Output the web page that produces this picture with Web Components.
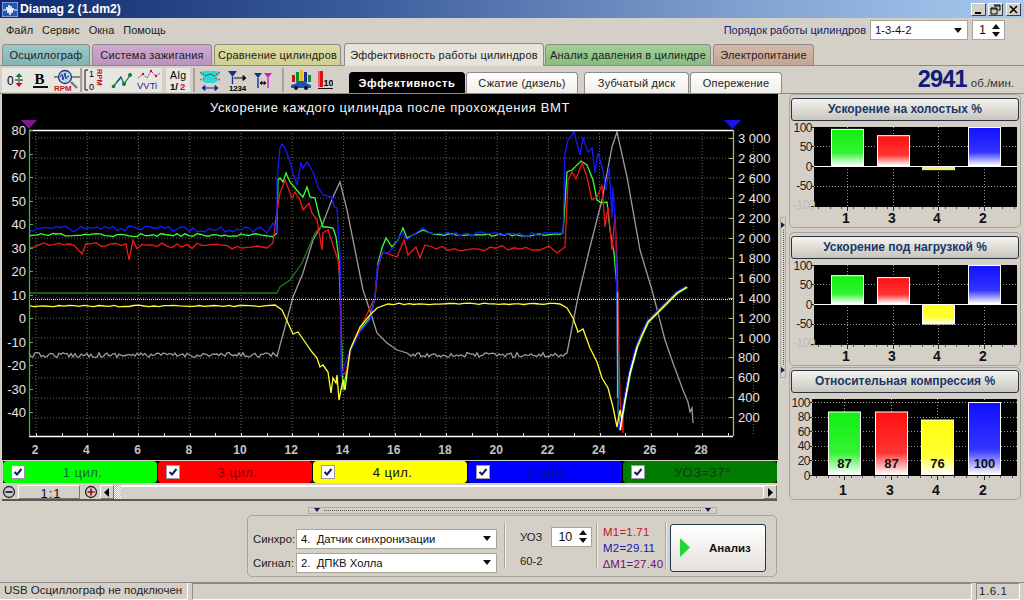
<!DOCTYPE html>
<html lang="ru">
<head>
<meta charset="utf-8">
<title>Diamag 2</title>
<style>
  html, body { margin: 0; padding: 0; width: 1024px; height: 600px; overflow: hidden; background: #d4d0c8; }
  body { font: 12px "Liberation Sans", Arial, sans-serif; color: #111; }
</style>
</head>
<body>
<app-window></app-window>

<script>
(() => {
  const FONT = '"Liberation Sans", Arial, sans-serif';

  // small helper: one template per element, cloned into an open shadow root
  function define(name, html, init) {
    const template = document.createElement('template');
    template.innerHTML = html;
    customElements.define(name, class extends HTMLElement {
      constructor() {
        super();
        this.attachShadow({ mode: 'open' }).appendChild(template.content.cloneNode(true));
        if (init) init(this, this.shadowRoot);
      }
    });
  }

  /* ---------- window chrome ---------- */

  define('title-bar', `
    <style>
      :host { display: flex; align-items: center; height: 18px; padding: 0 3px 0 2px;
        background: linear-gradient(90deg, #0f2b6e 0%, #3a5c9c 35%, #7d9ccc 70%, #a6caf0 100%); }
      svg.logo { width: 16px; height: 15px; margin-right: 2px; }
      b { flex: 1; color: #fff; font: bold 12.2px ${FONT}; }
      .wb { width: 15px; height: 13px; margin-left: 2px; background: #d4d0c8; border: 1px solid;
        border-color: #fff #404040 #404040 #fff; box-sizing: border-box; display: block; }
      .wb + .wb:last-child { margin-left: 3px; }
    </style>
    <svg class="logo" viewBox="0 0 16 15"><rect width="16" height="15" fill="#2456b8" stroke="#cfe0ff"/>
      <path d="M1 8H4L5 5 6 11 7 3 8 13 9 4 10 11 11 6 12 8H15" fill="none" stroke="#fff"/></svg>
    <b>Diamag 2 (1.dm2)</b>
    <svg class="wb" viewBox="0 0 13 11"><rect x="3" y="8" width="6" height="2"/></svg>
    <svg class="wb" viewBox="0 0 13 11"><path d="M5 1h6v5h-2M2 4h6v6H2zM2 5h6M5 2h6" fill="none" stroke="#000"/></svg>
    <svg class="wb" viewBox="0 0 13 11"><path d="M3 2l7 7M10 2l-7 7" stroke="#000" stroke-width="1.6"/></svg>
  `);

  define('drop-box', `
    <style>
      :host { display: flex; align-items: center; box-sizing: border-box; background: #fff; height: 20px;
        border: 1px solid #a8a498; padding: 0 5px 0 4px; font-size: 11.3px; color: #111; }
      span { flex: 1; white-space: pre; }
      i { width: 0; height: 0; border: 4px solid transparent; border-top: 5px solid #111; border-bottom: 0; }
    </style>
    <span><slot></slot></span><i></i>
  `);

  define('spin-box', `
    <style>
      :host { display: flex; align-items: center; box-sizing: border-box; background: #fff; height: 20px;
        border: 1px solid #a8a498; padding: 0 4px 0 6px; font-size: 12.5px; color: #111; }
      span { flex: 1; }
      div { display: flex; flex-direction: column; gap: 3px; }
      i { width: 0; height: 0; border: 4px solid transparent; }
      .u { border-bottom: 5px solid #111; border-top: 0; }
      .d { border-top: 5px solid #111; border-bottom: 0; }
    </style>
    <span><slot></slot></span><div><i class="u"></i><i class="d"></i></div>
  `);

  define('menu-bar', `
    <style>
      :host { display: flex; align-items: center; height: 24px; padding: 0 19px 0 6px; font-size: 11px; color: #222; }
      nav { flex: 1; display: flex; gap: 9px; }
      label { color: #15206e; margin-right: 4px; }
      drop-box { width: 98px; }
      spin-box { width: 33px; margin-left: 4px; }
    </style>
    <nav><span>Файл</span><span>Сервис</span><span>Окна</span><span>Помощь</span></nav>
    <label>Порядок работы цилиндров</label>
    <drop-box>1-3-4-2</drop-box>
    <spin-box>1</spin-box>
  `);

  /* ---------- tabs ---------- */

  define('main-tab', `
    <style>
      :host { display: flex; align-items: center; justify-content: center; box-sizing: border-box; height: 21px;
        border: 1px solid #8c8c84; border-bottom: 0; border-radius: 4px 4px 0 0; font-size: 11px; color: #222;
        background: var(--tab, #d4d0c8); letter-spacing: .2px; white-space: nowrap; }
      :host([active]) { height: 23px; background: #e6e3da; border-color: #8c8c84; margin-bottom: -1px; position: relative; }
    </style>
    <slot></slot>
  `);

  define('tab-strip', `
    <style>
      :host { display: flex; align-items: flex-end; height: 24px; padding-left: 2px; gap: 2px;
        border-bottom: 1px solid #8c8c84; box-sizing: border-box; }
    </style>
    <main-tab style="width:88px;--tab:linear-gradient(#9cc8c8,#82b4b4)">Осциллограф</main-tab>
    <main-tab style="width:120px;--tab:linear-gradient(#d0aad0,#bc92bc)">Система зажигания</main-tab>
    <main-tab style="width:127px;--tab:linear-gradient(#dcdca4,#cfcf8e)">Сравнение цилиндров</main-tab>
    <main-tab active style="width:200px;margin-left:1px;margin-right:-1px">Эффективность работы цилиндров</main-tab>
    <main-tab style="width:166px;--tab:linear-gradient(#a2d098,#88bc80)">Анализ давления в цилиндре</main-tab>
    <main-tab style="width:101px;--tab:linear-gradient(#d4baaa,#c2a594)">Электропитание</main-tab>
  `);

  define('sub-tab', `
    <style>
      :host { display: flex; align-items: center; justify-content: center; box-sizing: border-box; height: 21px;
        background: linear-gradient(#fff, #f0eee8); border: 1px solid #8c8c84; border-bottom: 0;
        border-radius: 4px 4px 0 0; font-size: 11px; color: #222; letter-spacing: .2px; }
      :host([active]) { background: #000; color: #fff; font-weight: bold; letter-spacing: .6px; border-color: #000; }
    </style>
    <slot></slot>
  `);

  /* ---------- toolbar icons ---------- */

  define('tool-btn', `
    <style>
      :host { display: flex; align-items: center; justify-content: center; height: 24px; background: #e8e6e0; flex: none; }
      ::slotted(svg) { display: block; }
    </style>
    <slot></slot>
  `);

  define('tool-bar', `
    <style>
      :host { display: flex; align-items: center; height: 28px; box-sizing: border-box; padding-left: 2px;
        border-bottom: 1px solid #8c8c84; }
      text { font-family: ${FONT}; }
      .sep { width: 2px; height: 24px; background: #a8a498; flex: none; }
      .tabs { display: flex; margin-left: 12px; gap: 1px; align-self: flex-end; }
      .rpm { margin-left: auto; padding-right: 10px; display: flex; align-items: baseline; gap: 4px; color: #333; font-size: 11.5px; }
      .rpm b { font-size: 23.5px; letter-spacing: -.8px; color: #101a7c; }
    </style>
    <tool-btn style="width:25px"><svg width="22" height="22"><text x="3" y="16" font-size="12">0</text>
      <path d="M15 4l-3.5 4h7z" fill="#0a8a3a"/><path d="M11 11h8" stroke="#111"/><path d="M15 18l-3.5-4h7z" fill="#d01010"/><path d="M15 7v3M15 12v3" stroke="#333"/></svg></tool-btn>
    <tool-btn style="width:27px"><svg width="18" height="20"><text x="2.5" y="14" font-size="15" font-weight="bold" style="font-family:'Liberation Serif',serif">B</text>
      <rect x="1" y="16" width="15" height="2" fill="#111"/></svg></tool-btn>
    <tool-btn style="width:26px"><svg width="26" height="24">
      <path d="M0 9h26" stroke="#223" /><circle cx="11" cy="9" r="6.5" fill="#bcd0e8" stroke="#223a7c" stroke-width="1.3"/>
      <path d="M6 9l2-3 1 6 2-7 1 6 2-3 1 1" fill="none" stroke="#223a7c"/><path d="M17 14l6 6" stroke="#777" stroke-width="2.4"/>
      <text x="0" y="23" font-size="8" font-weight="bold" fill="#c01818">RPM</text></svg></tool-btn>
    <div class="sep" style="margin-right:1px"></div>
    <tool-btn style="width:24px"><svg width="22" height="24"><path d="M4 2H1V22H4" fill="none" stroke="#111"/>
      <text x="5" y="9" font-size="9">1</text><text x="5" y="22" font-size="9">0</text>
      <text x="0" y="0" font-size="7.5" font-weight="bold" fill="#c01818" transform="translate(13,1) rotate(90)">RPM</text></svg></tool-btn>
    <tool-btn style="width:30px"><svg width="22" height="20"><path d="M2 17L10 7 13 14 20 4" fill="none" stroke="#0a7a3a" stroke-width="1.3"/>
      <path d="M6 12l4-5" stroke="#1f4fc0" stroke-width="1.3"/><circle cx="2.5" cy="16.5" r="1.8" fill="#0a7a3a"/><circle cx="13" cy="14" r="2" fill="#0a7a3a"/><circle cx="19" cy="5" r="2" fill="#0a7a3a"/></svg></tool-btn>
    <tool-btn style="width:25px"><svg width="25" height="24"><path d="M1 10L6 6 10 10 14 3 19 8 23 5" fill="none" stroke="#7a3a9c" stroke-dasharray="2 1"/>
      <circle cx="14" cy="3" r="1.2" fill="#d01010"/><circle cx="6" cy="6" r="1.2" fill="#d01010"/><circle cx="19" cy="8" r="1.2" fill="#d01010"/>
      <text x="0" y="21" font-size="9.5" fill="#1a2a8c">VVTi</text></svg></tool-btn>
    <div style="width:4px;flex:none"></div>
    <tool-btn style="width:24px"><svg width="22" height="24"><text x="3" y="11" font-size="10.5" letter-spacing=".5">Alg</text>
      <text x="3" y="22" font-size="9.5" font-weight="bold">1/</text><text x="13" y="22" font-size="9.5" font-weight="bold" fill="#d01010">2</text></svg></tool-btn>
    <div class="sep" style="margin:0 2px 0 3px"></div>
    <tool-btn style="width:26px;background:none"><svg width="24" height="24"><path d="M5 3H19L22 6 18 10 20 13 16 15H8L4 13 6 10 2 6z" fill="#2fd8d8"/>
      <path d="M2 4L8 8M22 4L16 8M2 12L7 10M22 12L17 10" stroke="#c01818" stroke-dasharray="2 1"/><path d="M7 8L12 6 17 8" fill="none" stroke="#0a7a7a"/>
      <path d="M4 20H20M4 20l3-2.5v5zM20 20l-3-2.5v5z" stroke="#1a2a9c" fill="#1a2a9c"/></svg></tool-btn>
    <tool-btn style="width:27px;background:none;margin-left:1px"><svg width="22" height="24"><path d="M1 3H10L5.5 9z" fill="#1a2a9c"/><path d="M5.5 9V16" stroke="#1a2a9c" stroke-width="1.4"/>
      <path d="M7 10H19M19 10l-3-2.5v5z" stroke="#111" fill="#111"/><text x="2" y="23" font-size="8" font-weight="bold" letter-spacing="-.2">1234</text></svg></tool-btn>
    <tool-btn style="width:24px;background:none"><svg width="20" height="22"><path d="M1 4H9L5 9z" fill="#1a2a9c"/><path d="M5 9V19" stroke="#1a2a9c" stroke-width="1.4"/>
      <path d="M11 4H19L15 9z" fill="#d818c8"/><path d="M15 9V19" stroke="#d818c8" stroke-width="1.4"/><path d="M7 14H13M7 14l2-1.5v3zM13 14l-2-1.5v3z" stroke="#111" fill="#111"/></svg></tool-btn>
    <div class="sep" style="margin:0 5px 0 7px"></div>
    <tool-btn style="width:23px;background:none"><svg width="22" height="22"><rect x="2" y="6" width="3" height="7" fill="#d01010"/><rect x="6" y="3" width="3" height="10" fill="#0a8a3a"/>
      <rect x="10" y="1" width="3" height="12" fill="#e0c020"/><rect x="14" y="3" width="3" height="10" fill="#1a2a9c"/><rect x="18" y="6" width="3" height="7" fill="#0a8a3a"/>
      <path d="M1 19V16L5 15 8 12H15L18 15 21 16V19z" fill="#1f50b8"/><circle cx="6" cy="19" r="2" fill="#111"/><circle cx="16" cy="19" r="2" fill="#111"/></svg></tool-btn>
    <tool-btn style="width:24px;background:none;margin-left:1px"><svg width="16" height="22"><rect x="1" y="2" width="5" height="16" fill="#d81010"/><rect x="1" y="2" width="2" height="16" fill="#f06060"/>
      <text x="6.5" y="17" font-size="9" font-weight="bold">10</text><rect x="1" y="19" width="15" height="1" fill="#111"/></svg></tool-btn>
    <div class="tabs">
      <sub-tab active style="width:116px">Эффективность</sub-tab>
      <sub-tab style="width:112px">Сжатие (дизель)</sub-tab>
      <sub-tab style="width:105px;margin-left:5px">Зубчатый диск</sub-tab>
      <sub-tab style="width:92px">Опережение</sub-tab>
    </div>
    <div class="rpm"><b>2941</b><span>об./мин.</span></div>
  `);

  /* ---------- oscillogram ---------- */

  let seed = 12345;
  const rnd = () => (seed = (seed * 16807) % 2147483647) / 2147483647;
  // flat noisy stretch of a trace, in screen pixels
  const flat = (x0, x1, y, amp, step = 4) => {
    const out = [];
    for (let x = x0; x <= x1; x += step) out.push([x, y + (rnd() - 0.5) * 2 * amp]);
    return out;
  };
  const pts = list => list.map(p => p[0].toFixed(1) + ',' + p[1].toFixed(1)).join(' ');

  // the part all four cylinders share after the second minimum
  const tail = d => [[620, 430], [625, 400], [630, 373], [637, 347], [642, 335], [648, 322], [655, 315], [667, 303], [677, 293], [687, 287]]
    .map(p => [p[0] + d, p[1] + d]);

  const TRACES = {
    gray: [...flat(29, 278, 355, 2.4, 2), [285, 327], [293, 297], [303, 273], [313, 240], [323, 223], [333, 197], [340, 182], [347, 210], [357, 260], [363, 290], [372, 317], [377, 333], [387, 343], [397, 350], [407, 353],
      ...flat(411, 565, 355, 2.4, 2), [567, 353], [578, 297], [590, 247], [602, 200], [612, 147], [617, 132], [627, 177], [640, 250], [652, 290], [665, 340], [673, 363], [683, 390], [688, 402], [690, 412], [692, 408], [693, 423]],
    dark: [[29, 293], [277, 293], [280, 287], [290, 280], [302, 263], [315, 233], [322, 225]],
    yellow: [...flat(29, 268, 306, .8, 5), [275, 305], [282, 310], [288, 323], [293, 334], [298, 332], [305, 342], [312, 352], [317, 358], [320, 367], [323, 365], [328, 372], [331, 393], [333, 378], [336, 383], [337, 375], [339, 400], [343, 380], [345, 390], [350, 350], [360, 327], [370, 315], [377, 308], [388, 304],
      ...flat(394, 555, 304, .8, 5), [560, 304], [567, 308], [573, 318], [578, 332], [583, 329], [590, 348], [597, 362], [602, 378], [608, 388], [613, 407], [617, 427], [620, 410], [622, 420], ...tail(0)],
    green: [...flat(29, 274, 235, 1.6), [277, 233], [278, 180], [280, 178], [283, 182], [286, 173], [290, 182], [295, 188], [300, 194], [303, 197], [307, 187], [310, 197], [315, 198], [319, 215], [323, 227], [327, 227], [333, 228], [336, 237], [339, 260], [341, 320], [343, 390], [346, 375], [350, 352], [360, 330], [370, 318], [375, 297], [378, 263], [382, 248], [386, 238], [392, 247], [398, 240], [403, 228], [407, 238], [413, 235], [423, 230], [430, 233],
      ...flat(436, 560, 235, 1.4), [563, 233], [567, 172], [572, 170], [581, 161], [587, 165], [593, 180], [597, 200], [602, 203], [607, 202], [610, 230], [614, 253], [617, 287], [618, 410], ...tail(.5)],
    red: [...flat(29, 78, 245, 3, 5), [82, 254], ...flat(86, 126, 245, 2.5, 5), [129, 260], [133, 240], ...flat(137, 258, 246, 3, 5), [267, 248], [273, 243], [276, 217], [280, 193], [285, 180], [292, 198], [295, 192], [300, 200], [303, 210], [309, 203], [312, 213], [317, 220], [322, 250], [323, 233], [328, 230], [333, 245], [338, 260], [340, 280], [341, 340], [342, 375], [346, 372], [352, 345], [362, 325], [375, 297], [378, 267], [383, 252], [397, 257], [404, 240], [408, 255], [416, 247], [420, 258], [425, 245], [432, 247],
      ...flat(436, 535, 248, 3, 6), [540, 250], [549, 246], [557, 253], [565, 247], [568, 180], [572, 172], [576, 179], [582, 163], [587, 177], [592, 200], [597, 197], [602, 185], [605, 227], [608, 207], [612, 250], [615, 215], [617, 260], [618, 300], [620, 400], [623, 433], [623, 407], ...tail(-.5)],
    blue: [...flat(29, 258, 229, 3), [260, 227], [267, 233], [273, 223], [277, 233], [277, 180], [280, 148], [282, 144], [285, 148], [290, 162], [293, 173], [297, 185], [301, 163], [303, 168], [307, 162], [313, 172], [318, 187], [323, 195], [332, 197], [334, 207], [337, 208], [338, 227], [340, 253], [341, 300], [341, 377], [346, 360], [350, 352], [360, 332], [370, 320], [375, 297], [377, 270], [382, 252], [388, 253], [395, 245], [402, 232], [407, 240], [413, 235], [423, 228], [430, 233],
      ...flat(436, 555, 234, 2.5), [563, 233], [565, 153], [568, 140], [574, 132], [580, 155], [583, 138], [588, 152], [592, 148], [595, 173], [598, 153], [603, 170], [606, 190], [609, 167], [612, 217], [613, 187], [615, 217], [617, 300], [618, 420], ...tail(-1)],
  };

  define('trace-plot', `
    <style>
      :host { display: block; width: 776px; height: 366px; background: #000; }
      svg { display: block; }
      text { font-family: ${FONT}; }
    </style>
    <svg width="776" height="366" viewBox="2 94 776 366"></svg>
  `, (host, root) => {
    const tx = t => 36 + (t - 2) * 25.62;
    let g = '';
    // dotted grid
    for (let t = 0; t <= 14; t++) g += `<path d="M${tx(2 + t * 2)} 130V436" stroke="#6a6a58" stroke-dasharray="1 2"/>`;
    for (let y = 138; y <= 420; y += 20) g += `<path d="M29 ${y}H733" stroke="#6a6a58" stroke-dasharray="1 2"/>`;
    // traces
    const col = { gray: '#9a9a9a', dark: '#1e7a1e', yellow: '#ffff30', green: '#38ff38', red: '#f01818', blue: '#1818ff' };
    for (const k of ['gray', 'dark', 'green', 'red', 'blue', 'yellow']) {
      g += `<polyline points="${pts(TRACES[k])}" fill="none" stroke="${col[k]}" stroke-width="1.3"/>`;
    }
    g += `<polyline points="${pts(tail(0).slice(0, 4))}" fill="none" stroke="#fff"/>`;
    g += `<path d="M617.5 292V398" stroke="#30d8d8" stroke-width="1.3"/>`;
    g += `<path d="M29 299.5H733" stroke="#c8ffd8" stroke-dasharray="1 1"/>`;
    // axes
    g += `<path d="M29 130.5H733M29 436.5H733" stroke="#fff" stroke-width="1.4"/>`;
    g += `<path d="M29.5 130V436" stroke="#4ab04a" stroke-width="1.3"/><path d="M733.5 130V436" stroke="#b4b468" stroke-width="1.3"/>`;
    for (let i = 0; i < 13; i++) {
      const y = Math.round(130 + i * 23.53) + .5;
      g += `<path d="M29 ${y}h4" stroke="#4ab04a"/>`;
      g += `<text x="26" y="${y + 4.5}" text-anchor="end" font-size="13" fill="#e4e4e4">${80 - i * 10}</text>`;
    }
    const fmt = v => v >= 1000 ? Math.floor(v / 1000) + ' ' + String(v % 1000).padStart(3, '0') : v;
    for (let i = 0; i < 15; i++) {
      const y = Math.round(138 + i * 19.95) + .5;
      g += `<path d="M729 ${y}h5" stroke="#b4b468"/>`;
      g += `<text x="738" y="${y + 4.5}" font-size="13" fill="#e4e4e4">${fmt(3000 - i * 200)}</text>`;
    }
    for (let t = 0; t <= 27; t++) {
      const x = Math.round(tx(2 + t)) + .5;
      g += `<path d="M${x} 436v-3" stroke="#ddd"/>`;
    }
    for (let t = 2; t <= 28; t += 2) {
      g += `<text x="${tx(t) - 1}" y="454" text-anchor="middle" font-size="12" font-weight="bold" fill="#c4c4c4">${t}</text>`;
    }
    g += `<path d="M21 120H37L29 129z" fill="#7a1a8c"/><path d="M724 120H741L732.5 129z" fill="#1414e8"/>`;
    g += `<text x="390" y="112" text-anchor="middle" font-size="13" fill="#f4f4f4" letter-spacing=".6">Ускорение каждого цилиндра после прохождения ВМТ</text>`;
    root.querySelector('svg').innerHTML = g;
  });

  define('legend-chip', `
    <style>
      :host { display: flex; align-items: center; box-sizing: border-box; flex: 1; height: 22px; border-radius: 4px;
        padding-left: 9px; background: var(--c); color: var(--t); font-size: 13px; letter-spacing: .5px; }
      i { width: 12px; height: 12px; background: #fff; display: flex; align-items: center; justify-content: center; flex: none; outline: 1px solid #99a; }
      span { flex: 1; text-align: center; padding-right: 16px; }
    </style>
    <i><svg width="10" height="10"><path d="M1.5 5L4 7.5 8.5 2" fill="none" stroke="#14205c" stroke-width="2"/></svg></i>
    <span><slot></slot></span>
  `);

  define('scroll-strip', `
    <style>
      :host { display: flex; align-items: stretch; height: 16px; box-sizing: border-box; border-bottom: 2px solid #5a5a54; margin-left: 2px; width: 775px; }
      .b { width: 14px; background: #d4d0c8; display: flex; align-items: center; justify-content: center; border: 1px solid; border-color: #fff #777 #777 #fff; box-sizing: border-box; }
      .z { width: 62px; margin: 0 4px 0 2px; padding-left: 4px; text-align: center; font-size: 13px; letter-spacing: 1px; border: 1px solid; border-color: #fff #777 #777 #fff; box-sizing: border-box; line-height: 15px; }
      .thumb { width: 7px; background: repeating-conic-gradient(#fff 0 25%, #bbb 0 50%) 0 0 / 2px 2px; }
      .track { flex: 1; background: #d4d0c8; border-top: 2px solid #fff; }
      circle { fill: #c8c8d4; stroke: #223; stroke-width: 1.3; }
    </style>
    <svg width="14" height="14"><circle cx="7" cy="7" r="5.5"/><path d="M3.5 7h7" stroke="#111" stroke-width="1.6"/></svg>
    <div class="z">1:1</div>
    <svg width="14" height="14"><circle cx="7" cy="7" r="5.5" style="fill:#d8c8c8"/><path d="M3.5 7h7M7 3.5v7" stroke="#8c1010" stroke-width="1.6"/></svg>
    <div style="width:2px"></div>
    <div class="b"><svg width="6" height="9"><path d="M5 0v9L0 4.5z"/></svg></div>
    <div class="thumb"></div>
    <div class="track"></div>
    <div class="b"><svg width="6" height="9"><path d="M1 0v9l5-4.5z"/></svg></div>
  `);

  define('h-splitter', `
    <style>
      :host { display: flex; align-items: center; box-sizing: border-box; height: 7px; width: 409px; margin-left: 308px;
        border: 1px solid #b0aca0; padding: 0 5px; gap: 4px; }
      i { width: 0; height: 0; border: 3px solid transparent; border-top: 4px solid #14205c; border-bottom: 0; }
      div { flex: 1; border-top: 1px dotted #555; }
    </style>
    <i></i><div></div><i></i>
  `);

  define('run-panel', `
    <style>
      :host { display: flex; align-items: stretch; box-sizing: border-box; width: 530px; height: 63px; margin-left: 247px;
        border: 1px solid #a8a498; border-radius: 5px; font-size: 11.3px; color: #222; }
      .pick { display: grid; grid-template-columns: 43px 201px; row-gap: 4px; align-items: center; align-content: start; padding: 13px 7px 0 5px; }
      .sep { width: 1px; margin: 7px 0; background: #a8a498; border-right: 1px solid #eee; }
      .uoz { width: 90px; box-sizing: border-box; padding: 12px 0 0 14px; }
      .uoz div { display: flex; align-items: center; gap: 9px; margin-bottom: 8px; height: 20px; margin-top: -1px; }
      .uoz spin-box { width: 41px; }
      .m { padding: 8px 0 0 5px; line-height: 16px; font-size: 11.5px; letter-spacing: .2px; width: 67px; box-sizing: border-box; }
      .run { width: 96px; height: 48px; margin: 8px 0 0 3px; box-sizing: border-box; border: 1px solid #1e3a4e; border-radius: 3px;
        background: linear-gradient(#fff, #e4e2dc); display: flex; align-items: center; padding-left: 9px; font-weight: bold; color: #111; font-size: 11.5px; }
      .run b { margin-left: 19px; }
    </style>
    <div class="pick">
      <span>Синхро:</span><drop-box>4.  Датчик синхронизации</drop-box>
      <span>Сигнал:</span><drop-box>2.  ДПКВ Холла</drop-box>
    </div>
    <div class="sep"></div>
    <div class="uoz"><div><span>УОЗ</span><spin-box>10</spin-box></div><span>60-2</span></div>
    <div class="sep"></div>
    <div class="m"><div style="color:#c81414">M1=1.71</div><div style="color:#1414b0">M2=29.11</div><div style="color:#701070;white-space:nowrap">∆M1=27.40</div></div>
    <div class="sep"></div>
    <div class="run"><svg width="10" height="19"><path d="M0 0L10 9.5 0 19z" fill="#22d838"/></svg><b>Анализ</b></div>
  `);

  /* ---------- right column ---------- */

  define('bar-panel', `
    <style>
      :host { display: block; box-sizing: border-box; width: 232px; border: 1px solid #a8a498; border-radius: 5px; padding: 3px 1px 0; }
      .head { box-sizing: border-box; height: 23px; line-height: 21px; text-align: center; border: 1px solid #2a3440; border-radius: 3px;
        background: linear-gradient(#f6f4f0, #c8c4bc); font-weight: bold; font-size: 12px; color: #16386a; }
      svg { display: block; margin-top: 1px; }
      text { font-family: ${FONT}; }
    </style>
    <div class="head"></div>
    <svg width="228" height="105" viewBox="0 0 228 105"></svg>
  `, (host, root) => {
    root.querySelector('.head').textContent = host.getAttribute('heading');
    const vals = host.getAttribute('values').split(',').map(Number);
    const names = ['1', '3', '4', '2'];
    const comp = host.hasAttribute('compress');
    const colors = ['#10f010', '#ff1010', '#ffff10', '#1010ff'];
    const X = comp ? [37, 84, 130, 177] : [40, 86, 131, 177];  // left edge of each bar
    const cTop = comp ? 5 : 5, cBot = comp ? 82 : 85, left = comp ? 21 : 23, zero = comp ? 81 : 44, k = comp ? 0.73 : 0.395;
    let g = '<defs>';
    colors.forEach((c, i) => {
      g += `<linearGradient id="g${i}" x1="0" y1="0" x2="0" y2="1"><stop offset="0" stop-color="${c}"/><stop offset=".65" stop-color="${c}" stop-opacity=".85"/><stop offset="1" stop-color="#fff" stop-opacity=".9"/></linearGradient>`;
    });
    g += '</defs>';
    g += `<rect x="${left}" y="${cTop}" width="${226 - left}" height="${cBot - cTop}" fill="#000"/>`;
    const ticks = comp ? [100, 80, 60, 40, 20, 0] : [100, 50, 0, -50, -100];
    ticks.forEach(v => {
      const y = Math.round(zero - v * k) + .5;
      if (v !== 0 && y > cTop + 3 && y < cBot - 3) g += `<path d="M${left} ${y}H226" stroke="#999" stroke-dasharray="1 2"/>`;
      g += `<path d="M${left - 3} ${y}h3" stroke="#222"/>`;
    });
    X.forEach(x => { g += `<path d="M${x + 16.5} ${cTop}V${cBot}" stroke="#999" stroke-dasharray="1 2"/>`; });
    ticks.forEach(v => {
      const y = zero - v * k;
      const end = v === -100 ? left + 1 : left - 2;
      g += `<text x="${end}" y="${y + 4.5 + (comp ? 0 : v === 100 ? 1 : v === -100 ? -1 : 0)}" text-anchor="end" font-size="12" fill="${v === -100 ? '#bbb' : '#222'}" letter-spacing="-.5">${v}</text>`;
    });
    vals.forEach((v, i) => {
      const y = zero - Math.max(v, 0) * k, h = Math.abs(v) * k;
      const top = Math.max(y, cTop);
      if (h < 8) {
        g += `<rect x="${X[i]}" y="${top + 1}" width="33" height="${h}" fill="#eeee70"/>`;
        return;
      }
      g += `<rect x="${X[i] + .5}" y="${top + .5}" width="32" height="${h - 1 + y - top}" fill="#fff"/>`;
      g += `<rect x="${X[i] + .5}" y="${top + .5}" width="32" height="${h - 1 + y - top}" fill="url(#g${v < 0 ? 2 : i})" stroke="#fff"/>`;
      if (comp) g += `<text x="${X[i] + 16.5}" y="74" text-anchor="middle" font-size="13" font-weight="bold" fill="#111">${v}</text>`;
    });
    if (!comp) g += `<path d="M${left} ${zero + .5}H226" stroke="#fff" stroke-width="1.2"/>`;
    // bottom axis with ticks
    for (let x = left + 4; x < 226; x += 11.5) g += `<path d="M${Math.round(x) + .5} ${cBot}v2" stroke="#555"/>`;
    X.forEach((x, i) => {
      g += `<path d="M${x + 16.5} ${cBot}v4" stroke="#333"/>`;
      g += `<text x="${x + 15}" y="101" text-anchor="middle" font-size="14" font-weight="bold" fill="#111">${names[i]}</text>`;
    });
    root.querySelector('svg').innerHTML = g;
  });

  define('v-splitter', `
    <style>
      :host { display: flex; flex-direction: column; align-items: center; justify-content: space-between; box-sizing: border-box;
        width: 6px; height: 161px; margin-top: 123px; border: 1px solid #b0aca0; padding: 4px 0; }
      i { width: 0; height: 0; border: 3px solid transparent; border-left: 4px solid #14205c; border-right: 0; }
      div { flex: 1; border-left: 1px dotted #555; margin: 2px 0; }
    </style>
    <i></i><div></div><i></i>
  `);

  define('status-bar', `
    <style>
      :host { display: flex; height: 18px; box-sizing: border-box; font-size: 11.5px; color: #222; gap: 4px; margin-top: 5px; border-top: 1px solid #8c8c84; }
      div { border: 1px solid; border-color: #8c8c84 #fff #fff #8c8c84; box-sizing: border-box; line-height: 15px; padding-left: 4px; white-space: nowrap; }
      .a { width: 188px; border-top: 0; border-left: 0; }
      .b { flex: 1; }
      .c { width: 44px; margin-right: 4px; padding-left: 2px; letter-spacing: .6px; }
    </style>
    <div class="a">USB Осциллограф не подключен</div><div class="b"></div><div class="c">1.6.1</div>
  `);

  /* ---------- whole window ---------- */

  define('app-window', `
    <style>
      :host { display: flex; flex-direction: column; width: 1024px; height: 600px; overflow: hidden; background: #d4d0c8; }
      .body { display: flex; flex: 1; min-height: 0; }
      .left { width: 780px; display: flex; flex-direction: column; }
      trace-plot { margin-left: 2px; }
      .legend { display: flex; gap: 1px; margin: 1px 0 0 3px; background: #000; width: 774px; }
      scroll-strip { margin-top: 2px; }
      h-splitter { margin-top: 6px; margin-bottom: 1px; }
      .right { margin-left: 3px; display: flex; flex-direction: column; }
      .right bar-panel + bar-panel { margin-top: 4px; }
      .right bar-panel[compress] { margin-top: 1px; padding-top: 2px; }
    </style>
    <title-bar></title-bar>
    <menu-bar></menu-bar>
    <tab-strip></tab-strip>
    <tool-bar></tool-bar>
    <div class="body">
      <div class="left">
        <trace-plot></trace-plot>
        <div class="legend">
          <legend-chip style="--c:#00ff00;--t:#0c6a3a">1 цил.</legend-chip>
          <legend-chip style="--c:#ff0000;--t:#7a0808">3 цил.</legend-chip>
          <legend-chip style="--c:#ffff00;--t:#111">4 цил.</legend-chip>
          <legend-chip style="--c:#0000ff;--t:#00108c">2 цил.</legend-chip>
          <legend-chip style="--c:#007c00;--t:#103c10">УОЗ=37°</legend-chip>
        </div>
        <scroll-strip></scroll-strip>
        <h-splitter></h-splitter>
        <run-panel></run-panel>
      </div>
      <v-splitter></v-splitter>
      <div class="right">
        <bar-panel heading="Ускорение на холостых %" values="94,78,-8,102"></bar-panel>
        <bar-panel heading="Ускорение под нагрузкой %" values="73,68,-52,102"></bar-panel>
        <bar-panel heading="Относительная компрессия %" values="87,87,76,100" compress></bar-panel>
      </div>
    </div>
    <status-bar></status-bar>
  `);
})();
</script>
</body>
</html>
